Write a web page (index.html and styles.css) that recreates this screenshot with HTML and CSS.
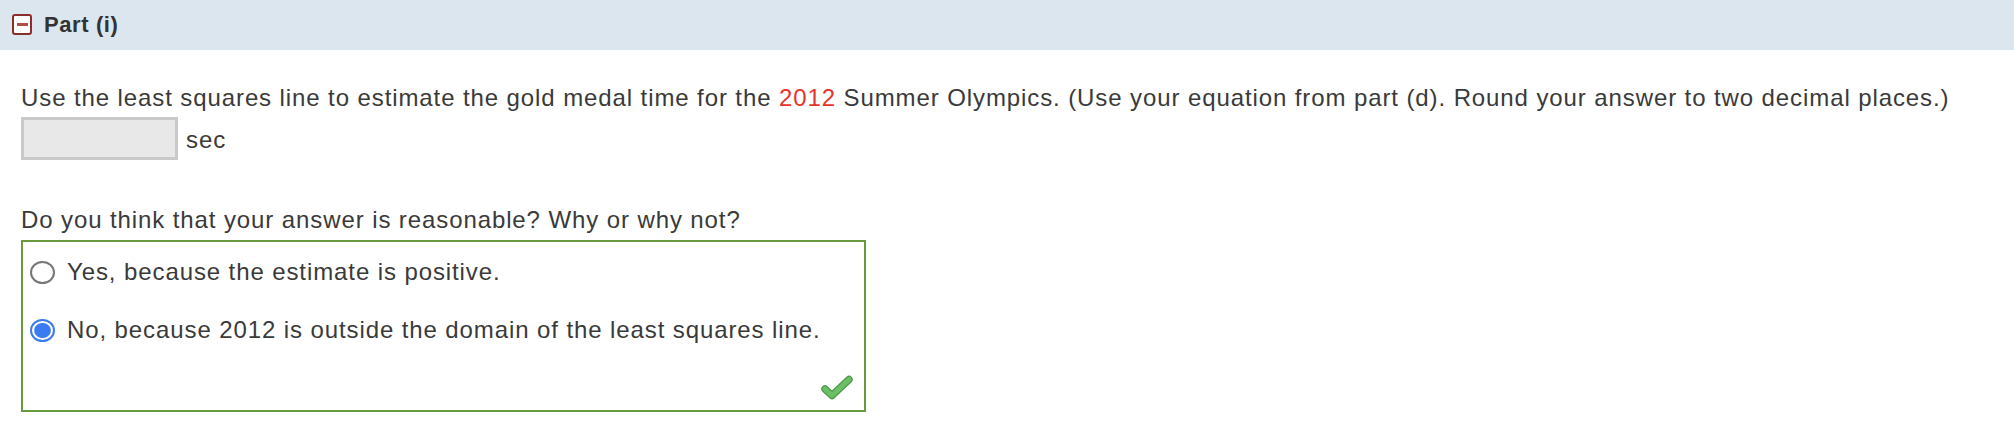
FILE: index.html
```html
<!DOCTYPE html>
<html lang="en">
<head>
  <meta charset="UTF-8" />
  <title>Part (i)</title>
  <link rel="stylesheet" href="styles.css">
</head>
<body>

  <div class="part-header">
    <span class="toggle"><span class="toggle-bar"></span></span>
    <span class="part-title">Part (i)</span>
  </div>

  <div class="part-body">
    <p class="question">Use the least squares line to estimate the gold medal time for the <span class="red">2012</span> Summer Olympics. (Use your equation from part (d). Round your answer to two decimal places.)</p>
    <div class="answer-row">
      <input type="text" class="answer-input" disabled>
      <span class="unit">sec</span>
    </div>

    <p class="question second">Do you think that your answer is reasonable? Why or why not?</p>
    <div class="choices">
      <label class="choice">
        <input type="radio" name="reasonable">
        <span>Yes, because the estimate is positive.</span>
      </label>
      <label class="choice">
        <input type="radio" name="reasonable" checked>
        <span>No, because 2012 is outside the domain of the least squares line.</span>
      </label>
      <div class="check-row">
        <svg class="check" width="32" height="25" viewBox="0 0 32 25">
          <path d="M4 14 L11 20.5 L28 4.5" fill="none" stroke="#4f9a4b" stroke-width="7.5" stroke-linecap="round" stroke-linejoin="round"/>
          <path d="M4 14 L11 20.5 L28 4.5" fill="none" stroke="#6cbf66" stroke-width="5" stroke-linecap="round" stroke-linejoin="round"/>
        </svg>
      </div>
    </div>
  </div>

</body>
</html>
```

FILE: styles.css
```css
body {
  font-family: 'Liberation Sans', Arial, sans-serif;
  margin: 0;
  background-color: #fff;
  color: #3a3a3a;
}

.part-header {
  display: flex;
  align-items: center;
  gap: 12px;
  height: 50px;
  padding-left: 12px;
  background-color: #dce6ef;
}

.toggle {
  display: flex;
  align-items: center;
  justify-content: center;
  width: 16px;
  height: 17px;
  margin-bottom: 2px;
  border: 2px solid #8e2b2b;
  border-radius: 3px;
  background-color: #fff;
}

.toggle-bar {
  width: 11px;
  height: 3px;
  background-color: #b24a4a;
}

.part-title {
  font-size: 22px;
  font-weight: bold;
  letter-spacing: 0.6px;
  color: #333;
}

.part-body {
  padding: 0 21px;
  font-size: 24px;
  letter-spacing: 0.9px;
}

.question {
  line-height: 26px;
  margin: 0;
  padding-top: 35px;
}

.question.second {
  padding-top: 47px;
}

.red {
  color: #e8332a;
}

.answer-row {
  display: flex;
  align-items: center;
  gap: 8px;
  margin-top: 6px;
}

.answer-input {
  width: 151px;
  height: 37px;
  box-sizing: content-box;
  padding: 0;
  border: 3px solid #c9c9c9;
  background-color: #e8e8e8;
}

.unit {
  line-height: 26px;
  margin-top: 2px;
}

.choices {
  width: 841px;
  margin-top: 7px;
  border: 2px solid #6b9a3e;
  padding-top: 17px;
}

.choice {
  display: flex;
  align-items: center;
  gap: 12px;
  padding-left: 7px;
  height: 26px;
  line-height: 26px;
  margin-bottom: 32px;
}

.choice input {
  appearance: none;
  -webkit-appearance: none;
  margin: 0;
  width: 25px;
  height: 23px;
  border: 2px solid #777;
  border-radius: 50%;
  box-sizing: border-box;
  background-color: #fff;
}

.choice input:checked {
  border-color: #3b7bf2;
  background: radial-gradient(ellipse, #3b7bf2 0 52%, #fff 60%);
}

.check-row {
  display: flex;
  justify-content: flex-end;
  padding-right: 11px;
  margin-top: 0;
  padding-bottom: 10px;
}

.check {
  display: block;
}
```
